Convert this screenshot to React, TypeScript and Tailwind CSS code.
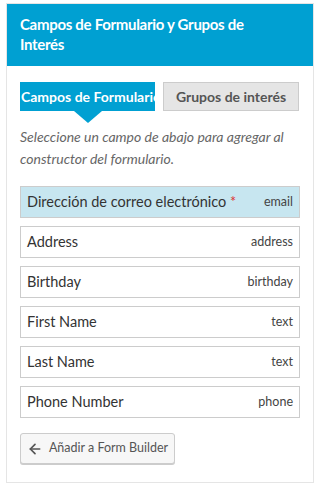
import { ArrowLeft } from "lucide-react";

const fields = [
  { label: "Address", type: "address" },
  { label: "Birthday", type: "birthday" },
  { label: "First Name", type: "text" },
  { label: "Last Name", type: "text" },
  { label: "Phone Number", type: "phone" },
];

const App = () => {
  return (
    <div className="bg-white pl-[6px] pr-[3px] pt-[3px] pb-[7px] font-['Lato',sans-serif]">
      <div className="border border-[#e5e5e5] bg-white">
        {/* Header */}
        <div className="bg-[#00a0d2] px-[13px] pt-[10px] pb-[12px]">
          <h2 className="w-[258px] text-[15px] leading-[20px] font-bold tracking-[-0.3px] text-white">
            Campos de Formulario y Grupos de Interés
          </h2>
        </div>

        <div className="px-[13px] pt-[16px] pb-[18px]">
          {/* Tabs */}
          <div className="flex gap-[8px]">
            <div className="relative w-[135px] h-[29px]">
              <div className="h-full bg-[#00a0d2] overflow-hidden whitespace-nowrap pl-[1px] text-[14px] leading-[29px] font-bold text-white">
                Campos de Formulario
              </div>
              <div className="absolute left-[54px] top-[29px] w-0 h-0 border-l-[14px] border-r-[14px] border-t-[12px] border-l-transparent border-r-transparent border-t-[#00a0d2]" />
            </div>
            <div className="w-[136px] h-[29px] bg-[#e5e5e5] border border-[#ccc] text-center text-[14px] leading-[27px] font-bold text-[#555]">
              Grupos de interés
            </div>
          </div>

          {/* Description */}
          <p className="mt-[15px] text-[14px] leading-[22px] italic text-[#666]">
            Seleccione un campo de abajo para agregar al constructor del formulario.
          </p>

          {/* Fields */}
          <div className="mt-[16px] flex flex-col gap-[8px]">
            <div className="h-[32px] flex items-center justify-between px-[6px] bg-[#c7e6f0] border border-[#ccc]">
              <span className="text-[14.5px] text-[#333]">
                Dirección de correo electrónico <span className="text-[#dc3232]">*</span>
              </span>
              <span className="text-[12.5px] text-[#444]">email</span>
            </div>
            {fields.map((f) => (
              <div
                key={f.label}
                className="h-[32px] flex items-center justify-between px-[6px] bg-white border border-[#ccc]"
              >
                <span className="text-[14.5px] text-[#333]">{f.label}</span>
                <span className="text-[12.5px] text-[#444]">{f.type}</span>
              </div>
            ))}
          </div>

          {/* Button */}
          <button className="mt-[15px] h-[31px] w-[155px] flex items-center justify-center gap-[6px] bg-[#f7f7f7] border border-[#ccc] rounded-[3px] shadow-[0_1px_0_#ccc] text-[12.5px] text-[#555]">
            <ArrowLeft className="w-[16px] h-[16px]" strokeWidth={2.5} />
            Añadir a Form Builder
          </button>
        </div>
      </div>
    </div>
  );
};

export default App;
